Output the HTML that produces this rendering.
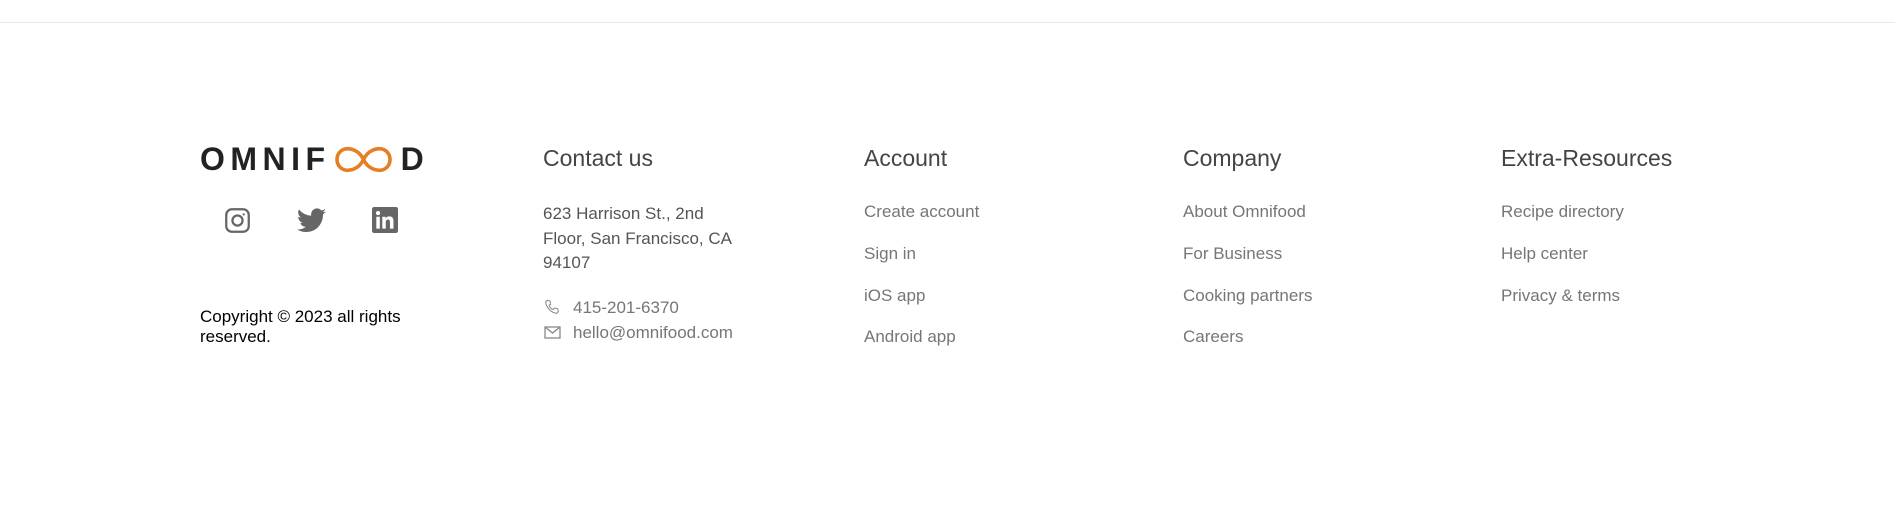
<!DOCTYPE html>
<html><head><meta charset="utf-8"><style>
*{margin:0;padding:0;box-sizing:border-box}
body{width:1895px;height:511px;background:#fff;position:relative;overflow:hidden;font-family:"Liberation Sans",sans-serif}
.line{position:absolute;left:0;top:22px;width:1895px;height:1px;background:#e8e8e8}
.abs{position:absolute;white-space:nowrap}
h3{position:absolute;font-weight:400;font-size:23px;color:#444;top:145px}
.lk{position:absolute;font-size:17px;color:#767676}
.logo{position:absolute;left:200px;top:141px;font-size:32px;font-weight:700;color:#222;letter-spacing:5.5px;display:flex;align-items:center}
</style></head><body>
<div class="line"></div>
<div class="logo"><span>OMNIF</span><svg width="57" height="27" viewBox="0 0 57 27" style="margin:0 9px 0 4px"><path d="M28.5 13.5 C24 4, 15 1.8, 10 3 C4.5 4.5, 2 9, 2 13.5 C2 18, 4.5 22.5, 10 24 C15 25.2, 24 23, 28.5 13.5 C33 4, 42 1.8, 47 3 C52.5 4.5, 55 9, 55 13.5 C55 18, 52.5 22.5, 47 24 C42 25.2, 33 23, 28.5 13.5Z" fill="none" stroke="#e67e22" stroke-width="3.6"/></svg><span style="letter-spacing:0">D</span></div>
<svg class="abs" style="left:224px;top:207px" width="27" height="27" viewBox="0 0 24 24" fill="none" stroke="#666" stroke-width="2"><rect x="2" y="2" width="20" height="20" rx="5"/><circle cx="12" cy="12" r="4.5"/><circle cx="17.5" cy="6.5" r="1" fill="#666" stroke="none"/></svg>
<svg class="abs" style="left:297px;top:208px" width="29" height="25" viewBox="0 0 24 20"><path fill="#666" d="M24 2.4c-.9.4-1.8.6-2.8.8 1-.6 1.8-1.6 2.200-2.700-1 .6-2 1-3.100 1.200C19.300.7 18 0 16.600 0c-2.700 0-4.900 2.200-4.900 4.900 0 .4 0 .8.1 1.100C7.700 5.800 4.100 3.900 1.700.9c-.4.7-.7 1.600-.7 2.500 0 1.700.9 3.200 2.200 4.100-.8 0-1.600-.2-2.200-.6v.1c0 2.400 1.700 4.400 3.900 4.800-.4.1-.8.2-1.300.2-.3 0-.6 0-.9-.1.6 2 2.400 3.400 4.600 3.400-1.700 1.300-3.800 2.100-6.100 2.100-.4 0-.8 0-1.200-.1 2.200 1.400 4.800 2.200 7.500 2.200 9.100 0 14-7.500 14-14v-.6c1-.7 1.800-1.600 2.500-2.500z"/></svg>
<svg class="abs" style="left:372px;top:207px" width="26" height="26" viewBox="0 0 24 24"><rect width="24" height="24" rx="2" fill="#666"/><rect x="4" y="9" width="3.2" height="11" fill="#fff"/><circle cx="5.6" cy="5.6" r="1.9" fill="#fff"/><path fill="#fff" d="M9.5 9h3v1.6c.5-.9 1.7-1.9 3.5-1.9 3.2 0 3.8 2.1 3.8 4.8V20h-3.2v-5.6c0-1.3-.1-2.9-1.8-2.9s-2.1 1.4-2.1 2.8V20H9.5z"/></svg>
<div class="abs" style="left:200px;top:307px;font-size:17px;line-height:20px;color:#000">Copyright © 2023 all rights<br>reserved.</div>
<h3 style="left:543px">Contact us</h3>
<div class="abs" style="left:543px;top:202px;font-size:17px;line-height:24.5px;color:#555">623 Harrison St., 2nd<br>Floor, San Francisco, CA<br>94107</div>
<svg class="abs" style="left:544px;top:299px" width="16" height="16" viewBox="0 0 24 24" fill="none" stroke="#888" stroke-width="1.5"><path d="M5 2l4 1 1 5-2.5 1.5c1 3 3.5 5.5 6.5 6.5L15.5 13.5l5 1 1 4-2 3C11 21 3 13 2.5 4z"/></svg>
<div class="lk" style="left:573px;top:298px">415-201-6370</div>
<svg class="abs" style="left:544px;top:326px" width="17" height="13" viewBox="0 0 17 13" fill="none" stroke="#888" stroke-width="1.3"><rect x="1" y="1" width="15" height="11"/><path d="M1 1l7.5 6L16 1"/></svg>
<div class="lk" style="left:573px;top:323px">hello@omnifood.com</div>
<h3 style="left:864px">Account</h3>
<div class="lk" style="left:864px;top:202px">Create account</div>
<div class="lk" style="left:864px;top:244px">Sign in</div>
<div class="lk" style="left:864px;top:286px">iOS app</div>
<div class="lk" style="left:864px;top:327px">Android app</div>
<h3 style="left:1183px">Company</h3>
<div class="lk" style="left:1183px;top:202px">About Omnifood</div>
<div class="lk" style="left:1183px;top:244px">For Business</div>
<div class="lk" style="left:1183px;top:286px">Cooking partners</div>
<div class="lk" style="left:1183px;top:327px">Careers</div>
<h3 style="left:1501px">Extra-Resources</h3>
<div class="lk" style="left:1501px;top:202px">Recipe directory</div>
<div class="lk" style="left:1501px;top:244px">Help center</div>
<div class="lk" style="left:1501px;top:286px">Privacy &amp; terms</div>
</body></html>
